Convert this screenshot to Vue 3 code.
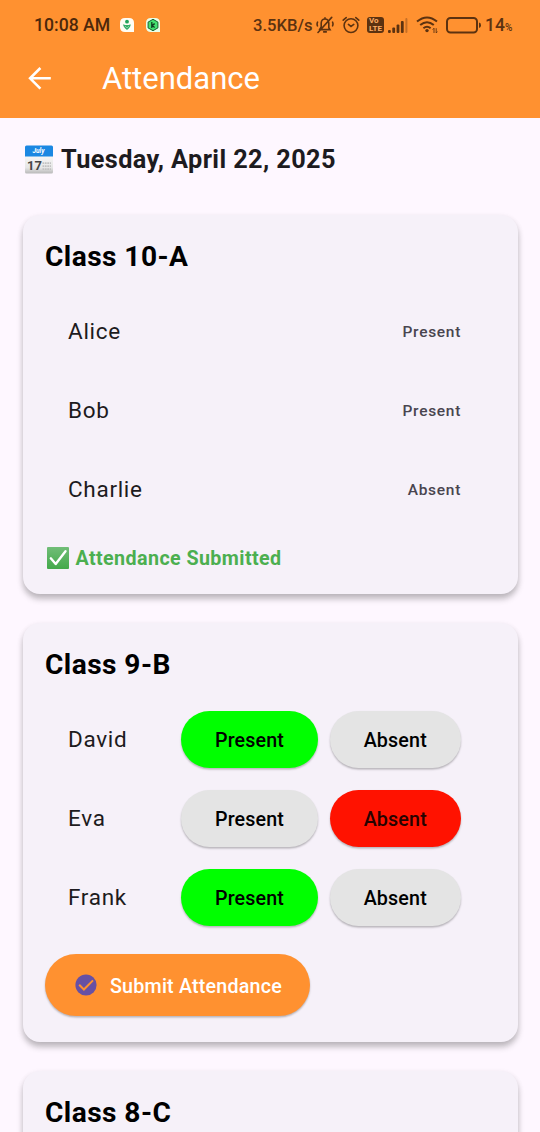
<script setup>
const classes = [
  {
    name: 'Class 10-A',
    submitted: true,
    students: [
      { name: 'Alice', status: 'Present' },
      { name: 'Bob', status: 'Present' },
      { name: 'Charlie', status: 'Absent' },
    ],
  },
  {
    name: 'Class 9-B',
    submitted: false,
    students: [
      { name: 'David', status: 'Present' },
      { name: 'Eva', status: 'Absent' },
      { name: 'Frank', status: 'Present' },
    ],
  },
  { name: 'Class 8-C', submitted: false, upcoming: true, students: [] },
]
</script>

<template>
  <div class="screen">
    <header>
      <div class="status">
        <span class="clock">10:08 AM</span>
        <svg class="app-one" width="14" height="14" viewBox="0 0 14 14">
          <path d="M5 0H9Q14 0 14 5V14H5Q0 14 0 9V5Q0 0 5 0Z" fill="#fffdf5" />
          <circle cx="7" cy="3.7" r="1.9" fill="#22a35a" />
          <path d="M3.2 6.2Q7 8 10.6 6.2Q11 9 7 12Q3 9 3.2 6.2Z" fill="#36ad68" />
          <path d="M5 8l2 2 2-2" fill="none" stroke="#9de0b7" stroke-width=".7" />
        </svg>
        <svg class="app-two" width="14" height="14" viewBox="0 0 14 14">
          <path d="M5 0H9Q14 0 14 5V14H5Q0 14 0 9V5Q0 0 5 0Z" fill="#e8ffe9" />
          <path d="M7 1.3l4.9 2.8v5.8L7 12.7l-4.9-2.8V4.1z" fill="#45e070" stroke="#176132" stroke-width="1" />
          <path d="M5.8 4v6M8.7 5.6L6.2 7.4l2.4 2.1" fill="none" stroke="#103c20" stroke-width="1.3" />
        </svg>
        <span class="speed">3.5KB/s</span>
        <svg class="bell" width="18" height="18" viewBox="0 0 18 18" fill="none" stroke="currentColor" stroke-width="1.6" stroke-linecap="round">
          <path d="M3.5 13.6H14L12.8 11.7V7Q12.5 3 9 3T5.2 7V11L3.5 13.6M7.7 15.9H10.3M9 1.7V3M1.5 6.2Q.7 8 1.4 9.8M16.6 6.2Q17.4 8 16.6 9.8M2 16.5L15.7 1.4" />
        </svg>
        <svg class="alarm" width="18" height="18" viewBox="0 0 18 18" fill="none" stroke="currentColor" stroke-width="1.6" stroke-linecap="round">
          <circle cx="9" cy="9.6" r="6.9" />
          <path d="M1.2 4.2L4.2 1.6M16.8 4.2L13.8 1.6M6.4 8.4L9 10.4L11.8 8.4" />
        </svg>
        <span class="volte"><span>Vo</span><span>LTE</span></span>
        <svg class="signal" width="20" height="15" viewBox="0 0 20 15" fill="currentColor">
          <rect x="0" y="12" width="2.8" height="3" rx="1" />
          <rect x="4.3" y="9.5" width="2.8" height="5.5" rx="1" />
          <rect x="8.6" y="6.5" width="2.8" height="8.5" rx="1" />
          <rect x="12.9" y="3" width="2.8" height="12" rx="1" />
          <rect x="17.4" y="0" width="2" height="15" rx="1" opacity=".35" />
        </svg>
        <svg class="wifi" width="23" height="18" viewBox="0 0 23 18" fill="none" stroke="currentColor" stroke-width="2">
          <path d="M1 5.6Q11 -2.6 21 5.6M4.2 9.1Q11 3.5 17.8 9.1M7.4 12.3Q11 9.3 14.6 12.3" />
          <circle cx="11" cy="14.6" r="1.7" fill="currentColor" stroke="none" />
          <path d="M18 12.2V17M16.7 13.6L18 12.2M20.2 12.2V17L21.4 15.6" stroke-width=".9" />
        </svg>
        <svg class="battery" width="36" height="17" viewBox="0 0 36 17">
          <rect x="1" y="1" width="30" height="14.5" rx="3.5" fill="none" stroke="currentColor" stroke-width="2" />
          <path d="M33 5.5Q35 5.5 35 8.2T33 11Z" fill="currentColor" />
        </svg>
        <span class="charge">14</span><span class="percent">%</span>
      </div>
      <div class="toolbar">
        <svg width="24" height="24" viewBox="0 0 24 24" fill="none" stroke="#fff" stroke-width="2.6">
          <path d="M22.8 12.3H3M12.4 2L2.1 12.3L12.4 22.6" />
        </svg>
        <h1>Attendance</h1>
      </div>
    </header>

    <main>
      <div class="date">
        <svg width="28" height="29" viewBox="0 0 28 29">
          <defs>
            <linearGradient id="paper" x1="0" y1="0" x2="0" y2="1">
              <stop offset="0" stop-color="#fff" />
              <stop offset=".75" stop-color="#e6e6e6" />
              <stop offset="1" stop-color="#b9b9b9" />
            </linearGradient>
          </defs>
          <rect y="5" width="28" height="23.5" rx="1.5" fill="url(#paper)" />
          <path d="M0 11.5V2Q0 .5 1.5 .5H26.5Q28 .5 28 2V11.5Z" fill="#1b88e2" />
          <text x="13.5" y="8.2" class="month">July</text>
          <text x="2" y="25.3" class="day">17</text>
          <path d="M17.5 18.2H26M17.5 21.2H26M17.5 24.2H26" stroke="#c2c2c2" stroke-width="1.7" stroke-dasharray="1.7 .7" />
        </svg>
        <span>Tuesday, April 22, 2025</span>
      </div>

      <section v-for="group in classes" :key="group.name" class="card">
        <h2>{{ group.name }}</h2>
        <div v-for="student in group.students" :key="student.name" class="row">
          <span class="name">{{ student.name }}</span>
          <span v-if="group.submitted" class="result">{{ student.status }}</span>
          <div v-else class="choices">
            <button class="choice present" :class="{ on: student.status === 'Present' }">Present</button>
            <button class="choice absent" :class="{ on: student.status === 'Absent' }">Absent</button>
          </div>
        </div>
        <div v-if="group.submitted" class="submitted">
          <svg width="22" height="22" viewBox="0 0 22 22">
            <defs>
              <linearGradient id="leaf" x1="0" y1="0" x2="0" y2="1">
                <stop offset="0" stop-color="#71bd78" />
                <stop offset="1" stop-color="#43a94a" />
              </linearGradient>
            </defs>
            <rect width="22" height="22" rx="1" fill="url(#leaf)" />
            <path d="M3.8 11.3L8.7 17L18.5 4.3" fill="none" stroke="#fff" stroke-width="2.4" stroke-linecap="round" stroke-linejoin="round" />
          </svg>
          <span>Attendance Submitted</span>
        </div>
        <button v-else-if="!group.upcoming" class="submit">
          <svg width="22" height="22" viewBox="0 0 22 22">
            <circle cx="11" cy="11" r="10.6" fill="#6750a4" />
            <path d="M4.2 10.8L8.9 15.5L18 6.4" fill="none" stroke="#ff9130" stroke-width="2" />
          </svg>
          <span>Submit Attendance</span>
        </button>
      </section>
    </main>
  </div>
</template>

<style>
body {
  margin: 0;
  background: #fef7ff;
}
</style>

<style scoped>
.screen {
  width: 540px;
  height: 1132px;
  overflow: hidden;
  background: #fef7ff;
  color: #1d1b20;
  font-family: Roboto, "Liberation Sans", sans-serif;
}
header {
  height: 118px;
  background: #ff9130;
}
.status {
  display: flex;
  align-items: center;
  height: 50px;
  padding-left: 34px;
  box-sizing: border-box;
  color: #5c3210;
  font-size: 16.6px;
  font-weight: 500;
  white-space: nowrap;
}
.status svg {
  flex: none;
}
.clock {
  width: 86px;
  color: #4c280b;
  font-size: 17.6px;
}
.app-one,
.app-two {
  margin-top: -1px;
}
.app-two {
  margin-left: 12px;
}
.speed {
  width: 63px;
  margin-left: 93px;
}
.alarm {
  margin-left: 8px;
}
.volte {
  display: flex;
  flex-direction: column;
  width: 17px;
  height: 16px;
  margin-left: 7px;
  border-radius: 3px;
  background: #5c3210;
  color: #ffad64;
  font-size: 8px;
  font-weight: 700;
  line-height: 7.8px;
}
.volte span {
  padding-left: 2px;
}
.signal {
  margin-left: 4px;
}
.wifi {
  margin-left: 8px;
}
.battery {
  margin-left: 7px;
}
.charge {
  margin-left: 3px;
  font-size: 17.5px;
}
.percent {
  padding-top: 5px;
  font-size: 10px;
}
.toolbar {
  display: flex;
  align-items: center;
  height: 56px;
  padding-left: 28px;
}
h1 {
  margin: 0 0 0 50px;
  color: #fff;
  font-size: 31px;
  font-weight: 400;
}
main {
  display: flex;
  flex-direction: column;
  padding: 0 22.5px;
}
.date {
  display: flex;
  align-items: center;
  height: 82.5px;
  padding: 0 0 14px 2.5px;
  font-size: 25.3px;
  font-weight: 700;
  letter-spacing: .39px;
  white-space: nowrap;
  box-sizing: content-box;
  margin-bottom: 0;
}
.date span {
  margin-left: 8px;
}
.month {
  fill: #fff;
  font-size: 6.5px;
  font-weight: 700;
  font-style: italic;
  letter-spacing: 0;
  text-anchor: middle;
}
.day {
  fill: #444;
  font-size: 13px;
  font-weight: 700;
  letter-spacing: 0;
}
.card {
  margin-bottom: 28.8px;
  padding: 22.5px;
  border-radius: 17px;
  background: #f6f1f9;
  box-shadow: 0 5px 6px rgba(0, 0, 0, .23), 0 2px 6px rgba(0, 0, 0, .07);
}
h2 {
  height: 54px;
  margin: 0;
  color: #000;
  font-size: 28.1px;
  font-weight: 700;
  letter-spacing: .44px;
  line-height: 39px;
}
.row {
  display: flex;
  align-items: center;
  justify-content: space-between;
  height: 79px;
  padding: 0 34px 0 23px;
}
.name {
  margin-top: .5px;
  font-size: 22.5px;
  letter-spacing: .7px;
}
.result {
  margin-top: 3px;
  color: #49454f;
  font-size: 15.5px;
  font-weight: 500;
  letter-spacing: .7px;
}
.choices {
  display: flex;
  gap: 11.5px;
  margin-top: 1.5px;
}
button {
  padding: 0;
  border: 0;
  font-family: inherit;
  font-size: 19.7px;
  font-weight: 500;
  letter-spacing: .14px;
  box-shadow: 0 1.5px 2px rgba(0, 0, 0, .26);
}
.choice {
  height: 56.5px;
  padding-top: 2px;
  border-radius: 29px;
  background: #e4e4e4;
  color: #000;
}
.present {
  width: 137px;
}
.absent {
  width: 131.5px;
}
.present.on {
  background: #0f0;
}
.absent.on {
  background: #ff1200;
  color: #260300;
}
.submitted {
  display: flex;
  align-items: center;
  gap: 7px;
  height: 28px;
  padding: 15.5px 0 0 1.5px;
  color: #4caf50;
  font-size: 19.7px;
  font-weight: 700;
  letter-spacing: .4px;
  white-space: nowrap;
}
.submitted span {
  padding-top: 1.5px;
}
.submit {
  display: flex;
  align-items: center;
  gap: 13px;
  width: 265px;
  height: 62.5px;
  margin: 17.5px 0 3px;
  padding-left: 30px;
  border-radius: 32px;
  background: #ff9130;
  color: #fff;
  letter-spacing: .2px;
  white-space: nowrap;
}
.submit span {
  padding-top: 2px;
}
</style>
